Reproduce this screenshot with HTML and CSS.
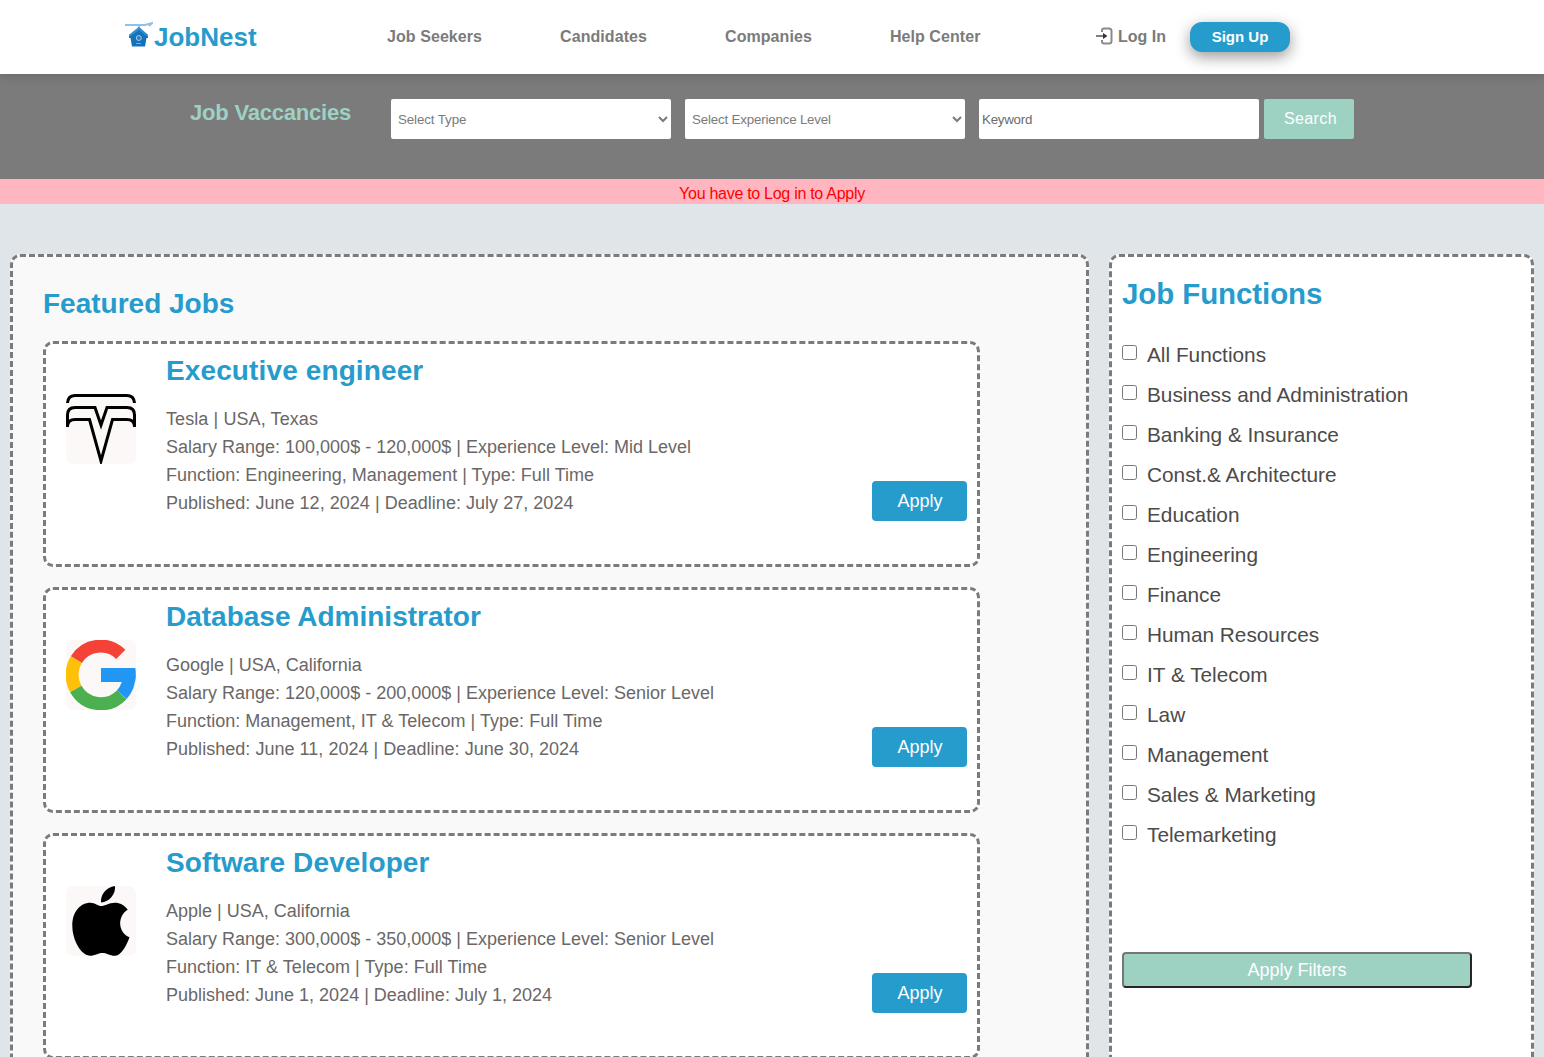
FILE: index.html
```html
<!DOCTYPE html>
<html lang="en">
<head>
<meta charset="utf-8">
<title>JobNest</title>
<link rel="stylesheet" href="styles.css">
</head>
<body>
<header class="header">
  <a class="brand">
    <svg class="brand-icon" width="28" height="27" viewBox="0 0 28 27">
      <path d="M0 4h20l7-2-3 3M14 4v4" fill="none" stroke="#8cc3e6" stroke-width="2"/>
      <path d="M14 6 4 14v3h1.500l1.500 8.500h13l1.500-8.500H23v-3z" fill="#1272ba"/>
      <path d="M14 6 4 14v2l10-7 9 7v-2z" fill="#3a90cd"/>
      <circle cx="13.800" cy="17" r="2.500" fill="#2c80c2" stroke="#a5cde9" stroke-width="1"/>
      <path d="M11 22.500h5" stroke="#6aaedc"/>
    </svg>
    <span class="brand-name">JobNest</span>
  </a>
  <nav class="nav"><a>Job Seekers</a><a>Candidates</a><a>Companies</a><a>Help Center</a></nav>
  <div class="account">
    <a class="login">
      <svg width="19" height="18" viewBox="0 0 19 18" fill="none">
        <path d="M6 5V3.500Q6 1.500 8 1.500h5q2.500 0 2.500 2.500v10q0 2.500-2.500 2.500H8q-2 0-2-2V13" stroke="#8b8b8b" stroke-width="2"/>
        <path d="M0 9h9" stroke="#666" stroke-width="1.700"/><path d="M7 6l4.500 3L7 12z" fill="#333"/>
      </svg>
      <span>Log In</span>
    </a>
    <a class="signup">Sign Up</a>
  </div>
</header>
<form class="search">
  <h1 class="search-title">Job Vaccancies</h1>
  <select class="field"><option>Select Type</option></select>
  <select class="field level"><option>Select Experience Level</option></select>
  <input class="field keyword" placeholder="Keyword">
  <button class="search-button" type="button">Search</button>
</form>
<p class="notice"><span>You have to Log in to Apply</span></p>
<main class="content">
  <section class="jobs">
    <h2 class="jobs-title">Featured Jobs</h2>
    <article class="job">
      <svg class="logo" viewBox="0 0 70 70">
        <rect width="70" height="70" fill="#fcf8f8"/>
        <g fill="none" stroke="#000" stroke-width="3">
          <path d="M1.500 9Q2 1.500 9 1.500h52q7 0 7.500 7.500"/>
          <path d="M1.500 33V21Q1.500 13.500 9 13.500h20L35 31l6-17.500h20q7.500 0 7.500 7.500v12"/>
          <path d="M1.500 32Q2 25.500 9 25.500h14.500L35 67l11.500-41.500H61q7 0 7.500 6.500"/>
        </g>
      </svg>
      <div class="job-info">
        <h3 class="job-title executive">Executive engineer</h3>
        <p class="tesla">Tesla | USA, Texas</p>
        <p>Salary Range: 100,000$ - 120,000$ | Experience Level: Mid Level</p>
        <p class="wide">Function: Engineering, Management | Type: Full Time</p>
        <p class="wide">Published: June 12, 2024 | Deadline: July 27, 2024</p>
      </div>
      <button class="apply">Apply</button>
    </article>
    <article class="job">
      <svg class="logo" viewBox="0 0 70 70">
        <rect width="70" height="70" fill="#fcf8f8"/>
        <g fill="none" stroke-width="13">
          <path d="M10.300 19.600A28.700 28.700 0 0 1 54.800 14.400" stroke="#f44336"/>
          <path d="M9.800 49A28.700 28.700 0 0 1 10.300 19.600" stroke="#ffc107"/>
          <path d="M55.800 54.700A28.700 28.700 0 0 1 9.800 49" stroke="#4caf50"/>
          <path d="M63.100 35A28.700 28.700 0 0 1 55.800 54.700" stroke="#2196f3"/>
        </g>
        <path d="M35 28h34.300q1.200 7-.5 14H35z" fill="#2196f3"/>
      </svg>
      <div class="job-info">
        <h3 class="job-title">Database Administrator</h3>
        <p>Google | USA, California</p>
        <p>Salary Range: 120,000$ - 200,000$ | Experience Level: Senior Level</p>
        <p class="wide">Function: Management, IT &amp; Telecom | Type: Full Time</p>
        <p class="wide">Published: June 11, 2024 | Deadline: June 30, 2024</p>
      </div>
      <button class="apply">Apply</button>
    </article>
    <article class="job">
      <svg class="logo" viewBox="0 0 70 70">
        <rect width="70" height="70" fill="#fcf8f8"/>
        <path d="M35 16.500C34.500 8 40 1.500 49 0c.8 8-5.500 16-14 16.500z"/>
        <path d="M35 20c4 0 8-3.300 14-3.300 5 0 9.500 2.300 12.700 7-10.500 6.500-10 22.500 1.800 27.500C60.500 60 55 69.800 48.500 69.800c-4.500 0-7-2.800-12-2.800s-8 2.800-12 2.800C15 69.800 6.300 54 6.300 39.500c0-14.500 8.700-22.800 18-22.800 4.700 0 8 3.300 10.700 3.300z"/>
      </svg>
      <div class="job-info">
        <h3 class="job-title developer">Software Developer</h3>
        <p>Apple | USA, California</p>
        <p>Salary Range: 300,000$ - 350,000$ | Experience Level: Senior Level</p>
        <p class="wide">Function: IT &amp; Telecom | Type: Full Time</p>
        <p>Published: June 1, 2024 | Deadline: July 1, 2024</p>
      </div>
      <button class="apply">Apply</button>
    </article>
  </section>
  <aside class="filters">
    <h2 class="filters-title">Job Functions</h2>
    <div class="filter-list">
      <label><input type="checkbox"><span>All Functions</span></label>
      <label><input type="checkbox"><span>Business and Administration</span></label>
      <label><input type="checkbox"><span>Banking &amp; Insurance</span></label>
      <label><input type="checkbox"><span>Const.&amp; Architecture</span></label>
      <label><input type="checkbox"><span>Education</span></label>
      <label><input type="checkbox"><span>Engineering</span></label>
      <label><input type="checkbox"><span>Finance</span></label>
      <label><input type="checkbox"><span>Human Resources</span></label>
      <label><input type="checkbox"><span>IT &amp; Telecom</span></label>
      <label><input type="checkbox"><span>Law</span></label>
      <label><input type="checkbox"><span>Management</span></label>
      <label><input type="checkbox"><span>Sales &amp; Marketing</span></label>
      <label><input type="checkbox"><span>Telemarketing</span></label>
    </div>
    <button class="apply-filters">Apply Filters</button>
  </aside>
</main>
</body>
</html>
```
FILE: styles.css
```css
* { box-sizing: border-box; }
body {
  margin: 0;
  height: 1057px;
  overflow: hidden;
  background: #dfe5e9;
  font-family: "Liberation Sans", Arial, sans-serif;
  color: #6b6767;
}
h1, h2, h3, p { margin: 0; }
button, input, select { font-family: inherit; }

.header {
  position: relative;
  display: flex;
  height: 74px;
  padding-left: 125px;
  background: #fff;
  box-shadow: 0 2px 10px rgba(0, 0, 0, .15);
  font-size: 16px;
  font-weight: 700;
  line-height: 20px;
  color: #7b7b7b;
}
.brand { display: flex; width: 262px; padding-top: 21px; color: #269ccd; }
.brand-name { font-size: 26px; line-height: 32px; margin-left: 1px; }
.nav { display: flex; gap: 78px; width: 709px; padding-top: 27px; letter-spacing: .07px; white-space: nowrap; }
.account { display: flex; gap: 24px; }
.login { display: flex; gap: 3px; padding-top: 27px; }
.signup {
  width: 100px;
  height: 30px;
  margin-top: 22px;
  border-radius: 12px;
  background: #269ccd;
  box-shadow: 0 5px 15px rgba(0, 0, 0, .4);
  color: #fff;
  font-size: 15px;
  line-height: 30px;
  text-align: center;
}

.search { display: flex; height: 105px; padding: 25px 0 0 190px; background: #7b7b7b; }
.search-title { width: 201px; color: #9dd2c3; font-size: 22px; line-height: 27px; letter-spacing: -.2px; }
.field {
  width: 280px;
  height: 40px;
  margin-right: 14px;
  padding: 1px 3px 0;
  border: 0;
  border-radius: 2px;
  background-color: #fff;
  color: #7b7b7b;
  font-size: 13.333px;
  letter-spacing: -.1px;
}
.level { letter-spacing: -.18px; }
.keyword { margin-right: 5px; letter-spacing: -.25px; }
.keyword::placeholder { color: #6b6b6b; }
.search-button {
  width: 90px;
  height: 40px;
  padding: 0 0 1px 3px;
  border: 0;
  border-radius: 2px;
  background: #9dd2c3;
  color: #fff;
  font-size: 16px;
  letter-spacing: .4px;
}
.notice { height: 25px; padding-top: 5px; background: #ffb6c1; color: #f00; font-size: 16px; line-height: 20px; letter-spacing: -.28px; text-align: center; }

.content { display: flex; gap: 20px; padding: 50px 10px 0; }
.jobs { flex: none; width: 1079px; height: 1100px; padding: 30px; border: 3px dashed #7b7b7b; border-radius: 10px; background: #f9f9f9; }
.jobs-title { margin-bottom: 20px; color: #269ccd; font-size: 28px; line-height: 34px; }
.job {
  display: flex;
  width: 937px;
  height: 226px;
  margin-bottom: 20px;
  padding: 10px 10px 0 20px;
  border: 3px dashed #7b7b7b;
  border-radius: 10px;
  background: #fff;
}
.logo { flex: none; width: 70px; height: 70px; margin: 40px 30px 0 0; border-radius: 7px; }
.job-info { flex: 1; font-size: 18px; line-height: 28px; }
.job-title { margin-bottom: 18px; color: #269ccd; font-size: 28px; line-height: 33px; }
.executive { letter-spacing: .12px; }
.developer { letter-spacing: .12px; }
.tesla { letter-spacing: .09px; }
.wide { letter-spacing: .03px; }
.apply { width: 95px; height: 40px; margin-top: 127px; padding: 0 0 0 1px; border: 0; border-radius: 4px; background: #269ccd; color: #fff; font-size: 18px; }

.filters { width: 425px; height: 1100px; padding: 20px 10px; border: 3px dashed #7b7b7b; border-radius: 10px; background: #fff; }
.filters-title { color: #269ccd; font-size: 29.500px; line-height: 34px; letter-spacing: -.1px; }
.filter-list { margin-top: 24px; }
.filter-list label { display: flex; height: 40px; gap: 10px; color: #4d4a4a; font-size: 20.800px; line-height: 40px; }
.filter-list input { width: 15px; height: 15px; margin: 10px 0 0; }
.apply-filters { width: 350px; height: 36px; margin-top: 97px; padding: 0; border: 2px solid; border-color: #767676 #262626 #262626 #767676; border-radius: 4px; background: #9dd2c3; color: #fff; font-size: 18px; }
```
